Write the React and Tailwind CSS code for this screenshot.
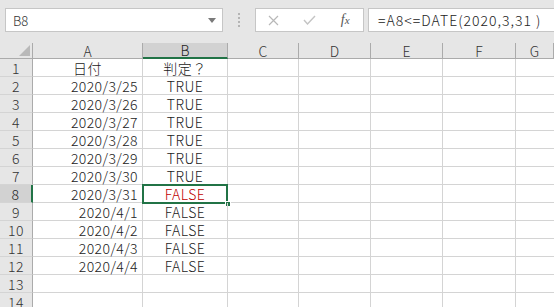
import React from "react";

const rows = [
  ["日付", "判定？"],
  ["2020/3/25", "TRUE"],
  ["2020/3/26", "TRUE"],
  ["2020/3/27", "TRUE"],
  ["2020/3/28", "TRUE"],
  ["2020/3/29", "TRUE"],
  ["2020/3/30", "TRUE"],
  ["2020/3/31", "FALSE"],
  ["2020/4/1", "FALSE"],
  ["2020/4/2", "FALSE"],
  ["2020/4/3", "FALSE"],
  ["2020/4/4", "FALSE"],
  ["", ""],
  ["", ""],
];

const cols = ["A", "B", "C", "D", "E", "F", "G"];

export default function App() {
  const font = { fontFamily: '"Noto Sans CJK JP", "Noto Sans", sans-serif' };
  return (
    <div className="w-[554px] h-[307px] overflow-hidden bg-white text-[#222] font-light" style={font}>
      {/* formula bar */}
      <div className="h-[43px] bg-[#e6e6e6] flex items-start pt-[8px]">
        <div className="ml-[5px] w-[218px] h-[24px] bg-white border border-[#c6c6c6] flex items-center pl-[7px] pr-[6px]">
          <span className="text-[13px] text-[#333] flex-1 leading-none">B8</span>
          <svg width="8" height="5" viewBox="0 0 8 5"><path d="M0 0 L8 0 L4 5 Z" fill="#7a7a7a" /></svg>
        </div>
        <div className="w-[32px] h-[24px] flex flex-col items-center justify-center gap-[2px]">
          <span className="w-[2px] h-[2px] bg-[#b4b4b4]" />
          <span className="w-[2px] h-[2px] bg-[#b4b4b4]" />
          <span className="w-[2px] h-[2px] bg-[#b4b4b4]" />
          <span className="w-[2px] h-[2px] bg-[#b4b4b4]" />
        </div>
        <div className="w-[109px] h-[24px] bg-white border border-[#c6c6c6] flex items-center">
          <div className="w-[36px] flex justify-center">
            <svg width="11" height="11" viewBox="0 0 11 11"><path d="M1 1 L10 10 M10 1 L1 10" stroke="#b8b8b8" strokeWidth="1.2" /></svg>
          </div>
          <div className="w-[36px] flex justify-center">
            <svg width="13" height="10" viewBox="0 0 13 10"><path d="M1 5 L4.5 9 L12 1" stroke="#c4c4c4" strokeWidth="1.4" fill="none" /></svg>
          </div>
          <div className="w-[36px] flex justify-center">
            <span className="text-[14px] italic text-[#555] leading-none" style={{ fontFamily: '"Liberation Serif", serif' }}>f<span className="text-[11px]">x</span></span>
          </div>
        </div>
        <div className="ml-[4px] flex-1 h-[24px] bg-white border border-[#c6c6c6] border-r-0 flex items-center pl-[9px]">
          <span className="text-[14px] text-[#222] leading-none whitespace-nowrap tracking-[1px]">=A8&lt;=DATE(2020,3,31 )</span>
        </div>
      </div>

      {/* grid */}
      <div className="grid grid-cols-[33px_110px_85px_71px_72px_72px_73px_1fr] grid-rows-[16px_repeat(14,18px)]">
        {/* header row */}
        <div className="bg-[#e6e6e6] border-r border-b border-[#ababab] relative">
          <svg className="absolute right-[2px] bottom-[2px]" width="11" height="11" viewBox="0 0 11 11"><path d="M11 0 L11 11 L0 11 Z" fill="#b9b9b9" /></svg>
        </div>
        {cols.map((c) => (
          <div
            key={c}
            className={
              c === "B"
                ? "bg-[#d2d2d2] border-r border-[#ababab] border-b-2 border-b-[#217346] flex items-center justify-center text-[14px] leading-none text-[#222]"
                : "bg-[#e6e6e6] border-r border-b border-[#ababab] flex items-center justify-center text-[14px] leading-none text-[#333]"
            }
          >
            {c}
          </div>
        ))}

        {rows.map((r, i) => {
          const n = i + 1;
          const sel = n === 8;
          return (
            <React.Fragment key={n}>
              <div
                className={
                  sel
                    ? "bg-[#d2d2d2] border-r-2 border-r-[#217346] border-b border-b-[#d4d4d4] flex items-center justify-center text-[14px] leading-none tracking-[0.5px] text-[#222]"
                    : "bg-[#e6e6e6] border-r border-r-[#ababab] border-b border-b-[#d4d4d4] flex items-center justify-center text-[14px] leading-none tracking-[0.5px] text-[#333]"
                }
              >
                {n}
              </div>
              <div
                className={
                  i === 0
                    ? "border-r border-b border-[#d4d4d4] flex items-center justify-center text-[14px] leading-none tracking-[0.5px]"
                    : "border-r border-b border-[#d4d4d4] flex items-center justify-end pr-[4px] text-[14px] leading-none tracking-[0.4px]"
                }
              >
                {r[0]}
              </div>
              <div className="relative border-r border-b border-[#d4d4d4] flex items-center justify-center text-[14px] leading-none tracking-[0.5px]">
                <span className={sel ? "text-[#c00000]" : ""}>{r[1]}</span>
                {sel && (
                  <div className="absolute left-[-1px] top-[-1px] w-[86px] h-[20px] border-2 border-[#217346]">
                    <div className="absolute right-[-5px] bottom-[-5px] w-[6px] h-[6px] bg-[#217346] border border-white" />
                  </div>
                )}
              </div>
              <div className="border-r border-b border-[#d4d4d4]" />
              <div className="border-r border-b border-[#d4d4d4]" />
              <div className="border-r border-b border-[#d4d4d4]" />
              <div className="border-r border-b border-[#d4d4d4]" />
              <div className="border-b border-[#d4d4d4]" />
            </React.Fragment>
          );
        })}
      </div>
    </div>
  );
}
